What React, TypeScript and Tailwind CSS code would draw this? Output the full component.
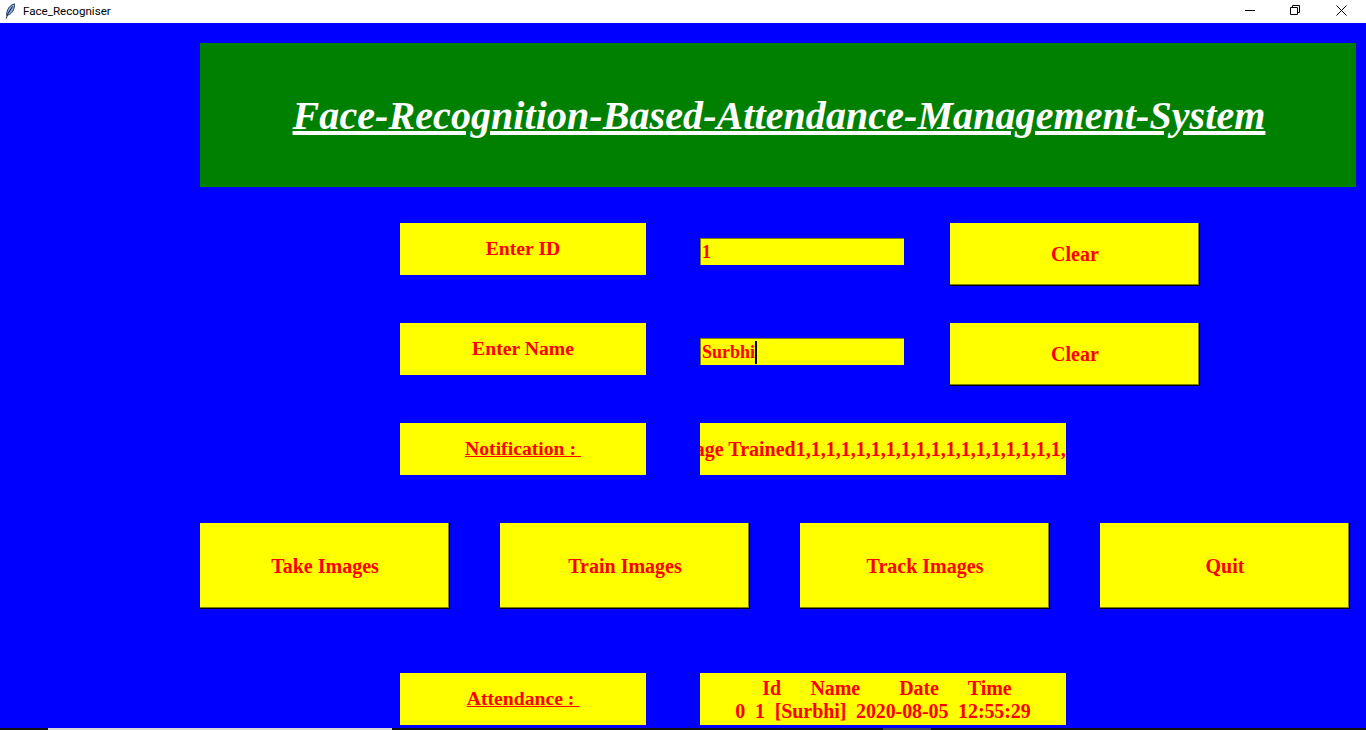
import type { ReactNode } from "react";

const face = "font-['Liberation_Serif',serif] font-bold text-[#ff0000]";
const serif = `${face} text-[20px]`;

function Label({ children, underline }: { children: ReactNode; underline?: boolean }) {
  return (
    <div className={`flex h-[52px] w-[246px] shrink-0 items-center justify-center bg-[#ffff00] ${face} text-[19.7px]`}>
      <span className={underline ? "underline whitespace-pre" : ""}>{children}</span>
    </div>
  );
}

function Entry({ value, caret }: { value: string; caret?: boolean }) {
  return (
    <div className="mt-[15px] ml-[54px] flex h-[27px] w-[204px] shrink-0 items-center border-t border-l border-[#808000] bg-[#ffff00] pl-[1px]">
      <span className={`${face} text-[18px] leading-none`}>{value}</span>
      {caret ? <span className="h-[23px] w-[2px] bg-black" /> : null}
    </div>
  );
}

function Btn({ label, className }: { label: string; className: string }) {
  return (
    <button
      type="button"
      className={`flex w-[250px] shrink-0 items-center justify-center bg-[#ffff00] shadow-[inset_-1px_-1px_0_#000,inset_-2px_-2px_0_#808000] ${serif} ${className}`}
    >
      {label}
    </button>
  );
}

function TitleBar() {
  return (
    <div className="flex h-[23px] items-center bg-white">
      <svg className="ml-[5px] mb-[2px]" width="11" height="16" viewBox="0 0 11 16" fill="none">
        <path d="M9.5.8C5.5 1.8 2.6 5 1.8 9.5L1.7 12.5 4.6 11.5C7.8 9.2 10 5.2 9.5.8Z" fill="#7ea6dc" stroke="#26385a" strokeWidth="0.9" />
        <path d="M7.5 3.5 3 10.5 1.2 15.5" stroke="#16213a" strokeWidth="1" />
      </svg>
      <span className="ml-[7px] font-['Roboto',sans-serif] text-[11.6px] text-black">Face_Recogniser</span>
      <div className="ml-auto flex h-full items-center pb-[3px]">
        <svg className="mr-[35px]" width="10" height="10" viewBox="0 0 10 10" fill="none">
          <path d="M0 5.5H10" stroke="#000" />
        </svg>
        <svg className="mr-[36px]" width="10" height="10" viewBox="0 0 10 10" fill="none">
          <path d="M.5 2.5H7.5V9.5H.5ZM2.5 2.5V.5H9.5V7.5H7.5" stroke="#000" />
        </svg>
        <svg className="mr-[19px]" width="11" height="11" viewBox="0 0 11 11" fill="none">
          <path d="M.5.5 10.5 10.5M10.5.5.5 10.5" stroke="#000" />
        </svg>
      </div>
    </div>
  );
}

export default function App() {
  return (
    <div className="flex h-[730px] w-[1366px] flex-col overflow-hidden bg-[#0000ff]">
      <TitleBar />
      <div className="flex-1 pl-[200px] pt-[20px]">
        <div className="flex h-[144px] w-[1156px] items-center justify-center bg-[#008000] pt-[2px] pl-[2px]">
          <h1 className="font-['Liberation_Serif',serif] text-[40px] font-bold italic tracking-[0.08px] text-white underline">
            Face-Recognition-Based-Attendance-Management-System
          </h1>
        </div>

        <div className="ml-[200px] mt-[36px] flex h-[63px]">
          <Label>Enter ID</Label>
          <Entry value="1" />
          <Btn label="Clear" className="ml-[46px] h-[63px] pb-[1px]" />
        </div>

        <div className="ml-[200px] mt-[37px] flex h-[63px]">
          <Label>Enter Name</Label>
          <Entry value="Surbhi" caret />
          <Btn label="Clear" className="ml-[46px] h-[63px] pb-[1px]" />
        </div>

        <div className="ml-[200px] mt-[37px] flex h-[52px]">
          <Label underline>{"Notification : "}</Label>
          <div className={`ml-[54px] flex h-[52px] w-[366px] items-center justify-center overflow-hidden whitespace-nowrap bg-[#ffff00] ${serif}`}>
            <span className="shrink-0">Image Trained1,1,1,1,1,1,1,1,1,1,1,1,1,1,1,1,1,1,1,1,</span>
          </div>
        </div>

        <div className="mt-[48px] flex h-[86px] gap-[50px]">
          <Btn label="Take Images" className="h-[86px]" />
          <Btn label="Train Images" className="h-[86px]" />
          <Btn label="Track Images" className="h-[86px]" />
          <Btn label="Quit" className="h-[86px]" />
        </div>

        <div className="ml-[200px] mt-[64px] flex h-[52px]">
          <Label underline>{"Attendance : "}</Label>
          <div className={`ml-[54px] flex h-[52px] w-[366px] flex-col items-center justify-center whitespace-pre bg-[#ffff00] leading-[24px] tracking-[-0.1px] ${serif}`}>
            <span className="-translate-x-[1px] translate-y-[1px]">{"  Id      Name        Date      Time"}</span>
            <span>{"0  1  [Surbhi]  2020-08-05  12:55:29"}</span>
          </div>
        </div>
      </div>
      <div className="flex h-[2px] shrink-0 bg-[#111111]">
        <div className="ml-[48px] h-full w-[344px] bg-[#d8d8d8]" />
        <div className="ml-[491px] h-full w-[48px] bg-[#444444]" />
      </div>
    </div>
  );
}
